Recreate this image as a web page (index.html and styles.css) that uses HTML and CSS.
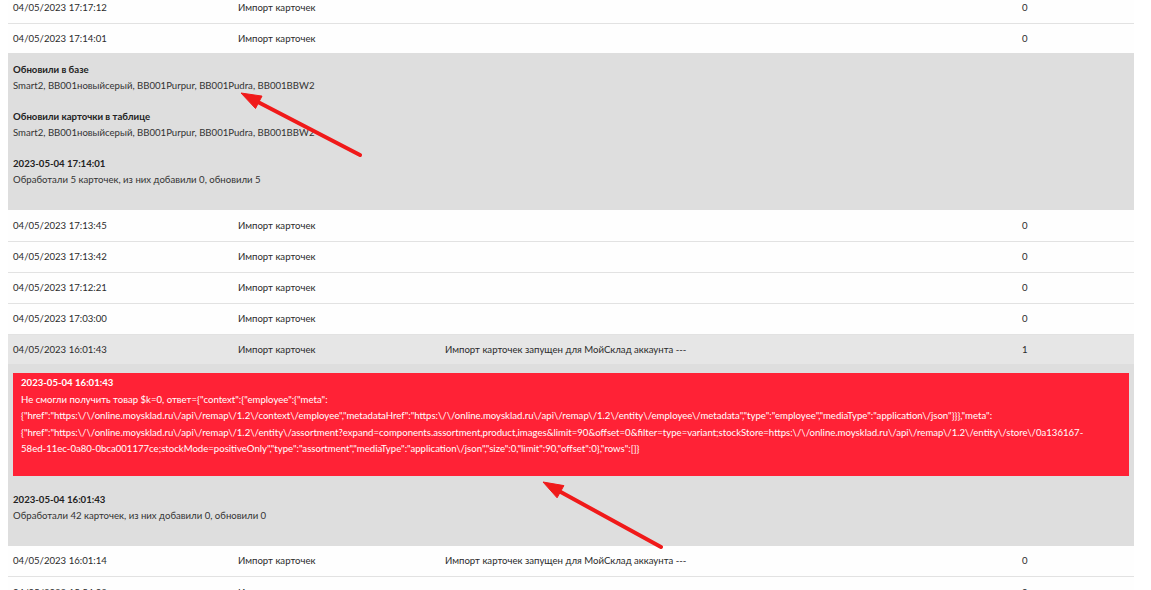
FILE: index.html
```html
<!DOCTYPE html>
<html lang="ru">
<head>
    <meta charset="UTF-8">
    <title>Журнал импорта</title>
    <link rel="stylesheet" href="styles.css">
</head>
<body>
    <div class="page">
        <table class="log">
            <colgroup>
                <col class="c-date">
                <col class="c-type">
                <col class="c-msg">
                <col class="c-count">
            </colgroup>
            <tbody>
                <tr class="row">
                    <td>04/05/2023 17:17:12</td>
                    <td>Импорт карточек</td>
                    <td></td>
                    <td>0</td>
                </tr>
                <tr class="row open">
                    <td>04/05/2023 17:14:01</td>
                    <td>Импорт карточек</td>
                    <td></td>
                    <td>0</td>
                </tr>
                <tr class="details">
                    <td colspan="4">
                        <div class="block">
                            <b>Обновили в базе</b><br>
                            Smart2, BB001новыйсерый, BB001Purpur, BB001Pudra, BB001BBW2
                        </div>
                        <div class="block">
                            <b>Обновили карточки в таблице</b><br>
                            Smart2, BB001новыйсерый, BB001Purpur, BB001Pudra, BB001BBW2
                        </div>
                        <div class="block">
                            <b>2023-05-04 17:14:01</b><br>
                            Обработали 5 карточек, из них добавили 0, обновили 5
                        </div>
                    </td>
                </tr>
                <tr class="row">
                    <td>04/05/2023 17:13:45</td>
                    <td>Импорт карточек</td>
                    <td></td>
                    <td>0</td>
                </tr>
                <tr class="row">
                    <td>04/05/2023 17:13:42</td>
                    <td>Импорт карточек</td>
                    <td></td>
                    <td>0</td>
                </tr>
                <tr class="row">
                    <td>04/05/2023 17:12:21</td>
                    <td>Импорт карточек</td>
                    <td></td>
                    <td>0</td>
                </tr>
                <tr class="row">
                    <td>04/05/2023 17:03:00</td>
                    <td>Импорт карточек</td>
                    <td></td>
                    <td>0</td>
                </tr>
                <tr class="row open active">
                    <td>04/05/2023 16:01:43</td>
                    <td>Импорт карточек</td>
                    <td>Импорт карточек запущен для МойСклад аккаунта ---</td>
                    <td>1</td>
                </tr>
                <tr class="details">
                    <td colspan="4">
                        <div class="error">
                            <b>2023-05-04 16:01:43</b><br>
                            Не смогли получить товар $k=0, ответ={"context":{"employee":{"meta":{"href":"https:\/\/online.moysklad.ru\/api\/remap\/1.2\/context\/employee","metadataHref":"https:\/\/online.moysklad.ru\/api\/remap\/1.2\/entity\/employee\/metadata","type":"employee","mediaType":"application\/json"}}},"meta":{"href":"https:\/\/online.moysklad.ru\/api\/remap\/1.2\/entity\/assortment?expand=components.assortment,product,images&amp;limit=90&amp;offset=0&amp;filter=type=variant;stockStore=https:\/\/online.moysklad.ru\/api\/remap\/1.2\/entity\/store\/0a136167-<br>58ed-11ec-0a80-0bca001177ce;stockMode=positiveOnly","type":"assortment","mediaType":"application\/json","size":0,"limit":90,"offset":0},"rows":[]}
                        </div>
                        <div class="block">
                            <b>2023-05-04 16:01:43</b><br>
                            Обработали 42 карточек, из них добавили 0, обновили 0
                        </div>
                    </td>
                </tr>
                <tr class="row">
                    <td>04/05/2023 16:01:14</td>
                    <td>Импорт карточек</td>
                    <td>Импорт карточек запущен для МойСклад аккаунта ---</td>
                    <td>0</td>
                </tr>
                <tr class="row">
                    <td>04/05/2023 15:54:03</td>
                    <td>Импорт карточек</td>
                    <td></td>
                    <td>0</td>
                </tr>
            </tbody>
        </table>

        <!-- Annotation arrows -->
        <svg class="marks" width="1151" height="590" viewBox="0 0 1151 590">
            <g fill="#f01a1a" stroke="#f01a1a">
                <line x1="256" y1="109" x2="360" y2="163" stroke-width="4" stroke-linecap="round"/>
                <polygon points="241,101 255.5,116.5 262,104.1" stroke-width="1" stroke-linejoin="round"/>
                <line x1="558" y1="498.5" x2="661" y2="555" stroke-width="4" stroke-linecap="round"/>
                <polygon points="543,490 557.1,505.8 563.9,493.6" stroke-width="1" stroke-linejoin="round"/>
            </g>
        </svg>
    </div>
</body>
</html>
```

FILE: styles.css
```css
* {
    margin: 0;
    padding: 0;
    box-sizing: border-box;
}

body {
    background: #fff;
    color: #2b2b2b;
    font-family: 'Lato', 'Liberation Sans', sans-serif;
    font-size: 9.6px;
    overflow: hidden;
    height: 590px;
}

.page {
    position: relative;
    padding: 0 8px;
}

/* Log table */
.log {
    width: 1126px;
    margin-top: -8px;
    border-collapse: collapse;
    table-layout: fixed;
}

.c-date { width: 225px; }
.c-type { width: 207px; }
.c-msg { width: 577px; }
.c-count { width: 117px; }

.row td {
    height: 31px;
    padding: 0 5px;
    vertical-align: middle;
    white-space: nowrap;
    background: #fefefe;
    border-bottom: 1px solid #e2e2e2;
}

.row.open td {
    height: 30px;
    border-bottom: none;
}

.row.active td {
    background: #e6e6e6;
}

/* Expanded details */
.details td {
    background: #dedede;
    padding: 9px 5px 7px;
    line-height: 16px;
    color: #333;
}

.block {
    margin-bottom: 15px;
}

.block b,
.error b {
    font-weight: 700;
    color: #222;
}

.error {
    background: #ff2236;
    color: #fff;
    padding: 2px 8px 18px;
    margin: 0 0 16px;
    line-height: 16.5px;
    overflow-wrap: anywhere;
}

.error b {
    color: #fff;
}

.marks {
    position: absolute;
    top: 0;
    left: 0;
    pointer-events: none;
}
```
